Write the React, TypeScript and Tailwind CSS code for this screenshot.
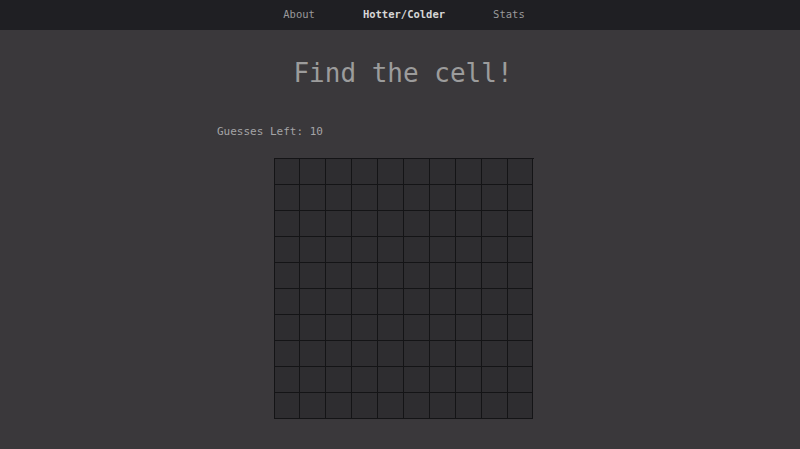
import React from 'react';

const navItems = [
  { label: 'About', active: false },
  { label: 'Hotter/Colder', active: true },
  { label: 'Stats', active: false },
];

const cells = Array.from({ length: 100 }, (_, i) => i);

export default function App() {
  return (
    <div className="min-h-screen w-full bg-[#3a383b] font-['DejaVu_Sans_Mono',monospace]">
      {/* Top nav */}
      <nav className="h-[30px] pl-[8px] bg-[#1f1f23] flex items-center justify-center gap-[48px]">
        {navItems.map(item => (
          <a
            key={item.label}
            className={
              item.active
                ? 'text-[10.5px] font-bold text-[#d6d6d6]'
                : 'text-[10.5px] text-[#9a9a9c]'
            }
          >
            {item.label}
          </a>
        ))}
      </nav>

      <main className="flex flex-col items-center">
        <h1 className="mt-[28px] ml-[6px] text-[26px] leading-[30px] text-[#9c9c9c]">Find the cell!</h1>

        <div className="w-[366px] mt-[37px]">
          <p className="text-[11px] leading-[14px] text-[#a4a4a6]">Guesses Left: 10</p>
        </div>

        <div className="mt-[19px] ml-[7px] grid grid-cols-10 w-[260px] border-l border-t border-[#141416]">
          {cells.map(i => (
            <div key={i} className="h-[26px] bg-[#2e2d30] border-r border-b border-[#141416]" />
          ))}
        </div>
      </main>
    </div>
  );
}
